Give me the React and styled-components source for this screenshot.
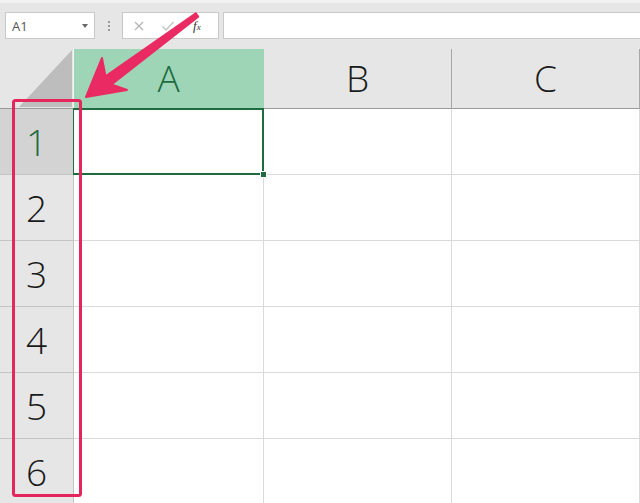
import styled, { createGlobalStyle } from 'styled-components';

const GlobalStyle = createGlobalStyle`
  html, body {
    margin: 0;
    padding: 0;
    background: #ffffff;
  }
  body {
    font-family: 'Open Sans', 'Noto Sans', sans-serif;
  }
`;

const Page = styled.div`
  position: relative;
  width: 640px;
  height: 503px;
  overflow: hidden;
  background: #ffffff;
`;

const Toolbar = styled.div`
  height: 49px;
  box-sizing: border-box;
  background: #e6e6e6;
  border-top: 3px solid #f1f1f1;
  display: flex;
  align-items: flex-start;
  padding: 9px 0 0 5px;
`;

const Box = styled.div`
  height: 27px;
  box-sizing: border-box;
  background: #ffffff;
  border: 1px solid #c9c9c9;
  display: flex;
  align-items: center;
`;

const NameBox = styled(Box)`
  width: 90px;
  padding: 0 6px 0 6px;
  justify-content: space-between;
  font-size: 13px;
  color: #555555;
`;

const Caret = styled.span`
  width: 0;
  height: 0;
  border-left: 3px solid transparent;
  border-right: 3px solid transparent;
  border-top: 4px solid #666666;
`;

const Dots = styled.div`
  width: 27px;
  height: 27px;
  display: flex;
  flex-direction: column;
  align-items: center;
  justify-content: center;
  gap: 2px;

  span {
    width: 2px;
    height: 2px;
    background: #9a9a9a;
  }
`;

const FxBox = styled(Box)`
  width: 97px;
  padding: 0 0 0 10px;
  gap: 16px;
`;

const FxIcon = styled.span`
  font-family: 'Liberation Serif', serif;
  font-style: italic;
  font-size: 13px;
  color: #333333;
  margin-left: 2px;

  sub {
    font-size: 9px;
    vertical-align: baseline;
  }
`;

const FormulaInput = styled(Box)`
  flex: 1;
  margin-left: 4px;
  border-right: none;
`;

const Grid = styled.div`
  display: grid;
  grid-template-columns: 74px 190px 188px 188px;
  grid-template-rows: 60px repeat(6, 66px);
`;

const Corner = styled.div`
  background: #e6e6e6;
  border-right: 1px solid #f4f4f4;
  border-bottom: 1px solid #9a9a9a;
  display: flex;
  align-items: flex-end;
  justify-content: flex-end;
  padding: 0 1px 1px 0;
  box-sizing: border-box;
`;

const ColHeader = styled.div`
  box-sizing: border-box;
  background: ${(p) => (p.$active ? '#9fd5b7' : '#e6e6e6')};
  color: ${(p) => (p.$active ? '#1d6b3f' : '#1a1a1a')};
  border-right: 1px solid ${(p) => (p.$active ? '#9fd5b7' : '#a8a8a8')};
  border-bottom: 1px solid ${(p) => (p.$active ? '#1d6b3f' : '#9a9a9a')};
  display: flex;
  align-items: center;
  justify-content: center;
  font-size: 37px;
  font-weight: 300;
  padding-bottom: 2px;
`;

const RowHeader = styled.div`
  box-sizing: border-box;
  background: ${(p) => (p.$active ? '#d3d3d3' : '#e6e6e6')};
  color: ${(p) => (p.$active ? '#1d6b3f' : '#1a1a1a')};
  border-right: 1px solid ${(p) => (p.$active ? '#1d6b3f' : '#c4c4c4')};
  border-bottom: 1px solid #c4c4c4;
  display: flex;
  align-items: center;
  justify-content: center;
  font-size: 37px;
  font-weight: 300;
`;

const Cell = styled.div`
  position: relative;
  box-sizing: border-box;
  border-right: 1px solid #dadada;
  border-bottom: 1px solid #dadada;

  ${(p) =>
    p.$selected &&
    `
    &::after {
      content: '';
      position: absolute;
      left: -1px;
      top: -1px;
      right: -1px;
      bottom: -1px;
      border: 2px solid #1d6b3f;
      border-left-width: 1px;
    }
    &::before {
      content: '';
      position: absolute;
      right: -4px;
      bottom: -4px;
      width: 5px;
      height: 5px;
      background: #1d6b3f;
      border: 1px solid #ffffff;
      z-index: 1;
    }
  `}
`;

const Overlay = styled.svg`
  position: absolute;
  left: 0;
  top: 0;
  pointer-events: none;
`;

const columns = ['A', 'B', 'C'];
const rows = [1, 2, 3, 4, 5, 6];

const App = () => {
  return (
    <Page>
      <GlobalStyle />
      <Toolbar>
        <NameBox>
          A1
          <Caret />
        </NameBox>
        <Dots>
          <span />
          <span />
          <span />
        </Dots>
        <FxBox>
          <svg width="12" height="12" viewBox="0 0 12 12">
            <path d="M2 2 L10 10 M10 2 L2 10" stroke="#b5b5b5" strokeWidth="1.3" />
          </svg>
          <svg width="14" height="12" viewBox="0 0 14 12">
            <path d="M1.5 6.5 L5 10 L12.5 2" stroke="#c4c4c4" strokeWidth="1.4" fill="none" />
          </svg>
          <FxIcon>
            f<sub>x</sub>
          </FxIcon>
        </FxBox>
        <FormulaInput />
      </Toolbar>

      <Grid>
        <Corner>
          <svg width="53" height="57" viewBox="0 0 53 57">
            <polygon points="53,0 53,57 0,57" fill="#bdbdbd" />
          </svg>
        </Corner>
        {columns.map((c) => (
          <ColHeader key={c} $active={c === 'A'}>
            {c}
          </ColHeader>
        ))}
        {rows.map((r) => (
          <>
            <RowHeader key={`h${r}`} $active={r === 1}>
              {r}
            </RowHeader>
            {columns.map((c) => (
              <Cell key={`${c}${r}`} $selected={r === 1 && c === 'A'} />
            ))}
          </>
        ))}
      </Grid>

      <Overlay width="640" height="503" viewBox="0 0 640 503">
        <rect
          x="13.5"
          y="100.5"
          width="67"
          height="395"
          rx="2"
          fill="none"
          stroke="#e5265d"
          strokeWidth="3"
        />
        <polygon
          points="86,97 127,90 111.5,84.4 198.2,16.6 195.8,13.4 105.5,76.4 102,58"
          fill="#ea2a62"
          stroke="#ea2a62"
          strokeWidth="2"
          strokeLinejoin="round"
        />
      </Overlay>
    </Page>
  );
};

export default App;
